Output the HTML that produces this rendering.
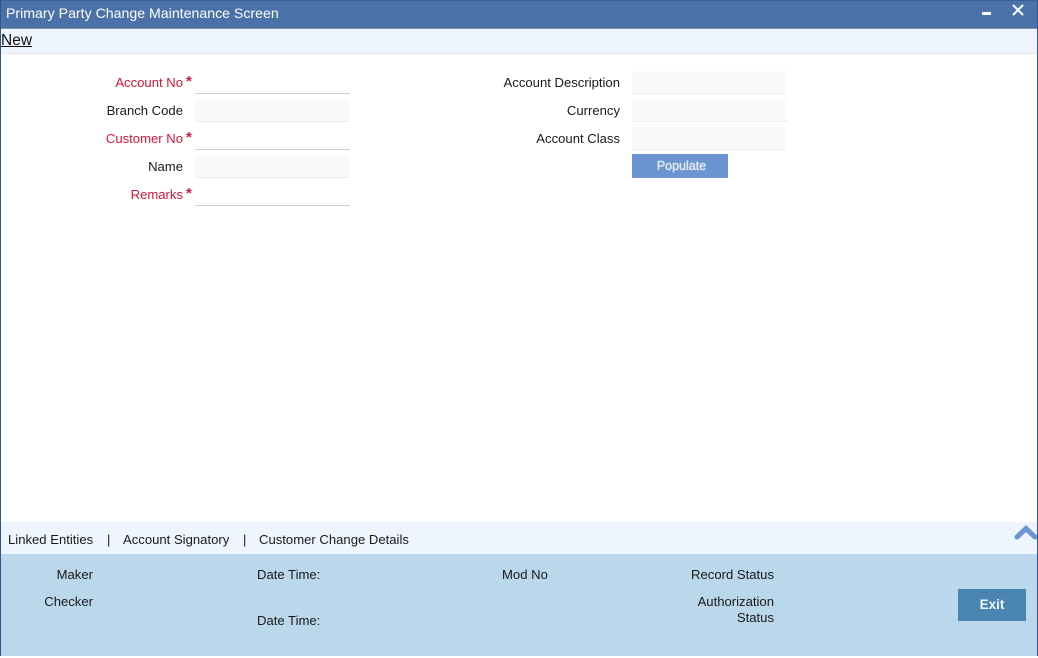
<!DOCTYPE html>
<html>
<head>
<meta charset="utf-8">
<style>
html,body{margin:0;padding:0;background:#fff;}
body{width:1038px;height:658px;position:relative;overflow:hidden;font-family:"Liberation Sans",Arial,sans-serif;font-size:13.1px;color:#1a1a1a;}
.a{position:absolute;white-space:nowrap;line-height:16px;}
.r{text-align:right;}
.red{color:#d5153a;}
.f{position:absolute;width:155px;height:22px;background:#fafafa;border-bottom:1px solid #eeeeee;}
.e{position:absolute;width:155px;height:22px;background:#fff;border-bottom:1px solid #cfcfcf;}
.st{position:absolute;color:#d5153a;font-size:15px;line-height:16px;font-weight:bold;}
</style>
</head>
<body>
<div style="position:absolute;left:0;top:0;width:1038px;height:28px;background:#4a71a8;border-bottom:1px solid #7d96b0;"></div>
<div style="position:absolute;left:0;top:0;width:1038px;height:1px;background:#3a5f98;"></div>
<div class="a" style="left:6px;top:5px;color:#fff;font-size:14.15px;">Primary Party Change Maintenance Screen</div>
<div style="position:absolute;left:982px;top:12px;width:9px;height:3px;background:#fff;"></div>
<svg style="position:absolute;left:1011px;top:3px" width="14" height="14" viewBox="0 0 14 14"><path d="M2 2L12 12M12 2L2 12" stroke="#fff" stroke-width="2" fill="none"/></svg>

<div style="position:absolute;left:0;top:29px;width:1038px;height:24px;background:#eef5fe;border-bottom:1px solid #e6e8ec;"></div>
<div class="a" style="left:1px;top:32px;font-size:15.5px;line-height:18px;color:#111;text-decoration:underline;">New</div>

<div class="a r red" style="right:855px;top:75px;">Account No</div><div class="st" style="left:186px;top:74px;">*</div>
<div class="e" style="left:195px;top:71px;"></div>
<div class="a r" style="right:855px;top:103px;">Branch Code</div>
<div class="f" style="left:195px;top:99px;"></div>
<div class="a r red" style="right:855px;top:131px;">Customer No</div><div class="st" style="left:186px;top:130px;">*</div>
<div class="e" style="left:195px;top:127px;"></div>
<div class="a r" style="right:855px;top:159px;">Name</div>
<div class="f" style="left:195px;top:155px;"></div>
<div class="a r red" style="right:855px;top:187px;">Remarks</div><div class="st" style="left:186px;top:186px;">*</div>
<div class="e" style="left:195px;top:183px;"></div>

<div class="a r" style="right:418px;top:75px;">Account Description</div>
<div class="f" style="left:632px;top:71px;"></div>
<div class="a r" style="right:418px;top:103px;">Currency</div>
<div class="f" style="left:632px;top:99px;"></div>
<div class="a r" style="right:418px;top:131px;">Account Class</div>
<div class="f" style="left:632px;top:127px;"></div>
<div class="a" style="left:632px;top:154px;width:99px;height:24px;line-height:24px;background:linear-gradient(#6b95d0,#6b95d0) 0 0/96px 24px no-repeat;color:#e6e9ee;text-align:center;font-size:12.5px;text-shadow:0 0 1px #fff;">Populate</div>

<div style="position:absolute;left:0;top:522px;width:1038px;height:32px;background:#eef5fe;"></div>
<div class="a" style="left:8px;top:532px;">Linked Entities</div>
<div class="a" style="left:107px;top:532px;">|</div>
<div class="a" style="left:123px;top:532px;">Account Signatory</div>
<div class="a" style="left:243px;top:532px;">|</div>
<div class="a" style="left:259px;top:532px;">Customer Change Details</div>
<svg style="position:absolute;left:1014px;top:525px" width="24" height="16" viewBox="0 0 24 16"><path d="M3 12L12 3.5L21 12" stroke="#6b95d0" stroke-width="5" stroke-linecap="round" stroke-linejoin="miter" fill="none"/></svg>

<div style="position:absolute;left:0;top:554px;width:1038px;height:102px;background:#bbd7ec;"></div>
<div class="a r" style="right:945px;top:567px;">Maker</div>
<div class="a r" style="right:945px;top:594px;">Checker</div>
<div class="a" style="left:257px;top:567px;">Date Time:</div>
<div class="a" style="left:257px;top:613px;">Date Time:</div>
<div class="a" style="left:502px;top:567px;">Mod No</div>
<div class="a r" style="right:264px;top:567px;">Record Status</div>
<div class="a r" style="right:264px;top:594px;">Authorization</div>
<div class="a r" style="right:264px;top:610px;">Status</div>
<div class="a" style="left:958px;top:589px;width:68px;height:32px;line-height:31px;background:#4a84b1;color:#f2f6fa;text-align:center;font-weight:bold;font-size:13.5px;">Exit</div>

<div style="position:absolute;left:0;top:0;width:1px;height:656px;background:#2f5590;"></div>
<div style="position:absolute;right:0;top:0;width:1px;height:656px;background:#2f5590;"></div>
</body>
</html>
